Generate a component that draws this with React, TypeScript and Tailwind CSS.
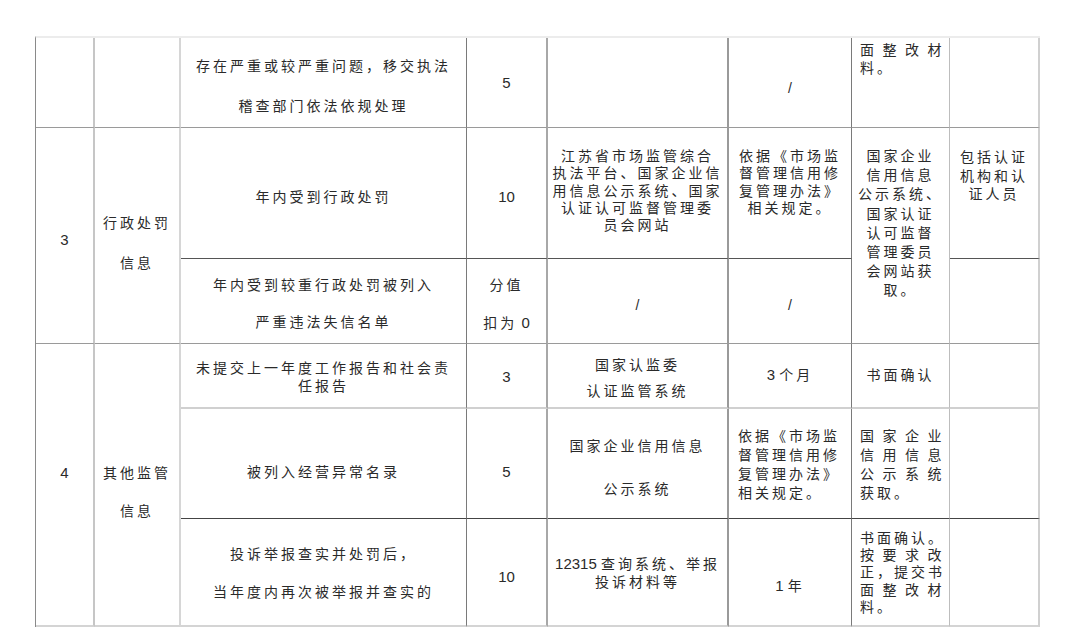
import React from "react";

export default function App() {
  return (
    <div className="w-[1080px] h-[628px] bg-white overflow-hidden font-['Liberation_Sans','Noto_Sans_CJK_SC',sans-serif] text-[14px] text-[#2a2a2a] tracking-[3px]">
      <div className="ml-[35px] mt-[36px] w-fit grid grid-cols-[59px_86px_286px_81px_181px_123px_98px_90px] grid-rows-[90px_131px_85px_65px_110px_108px] border-l border-l-[#8a8a8a] border-t-2 border-t-[#ececec]">
        {/* Row 1 */}
        <div className="col-start-1 row-start-1 border-r-2 border-r-[#c6c6c6] border-b border-b-[#9a9a9a]" />
        <div className="col-start-2 row-start-1 border-r-2 border-r-[#d6d6d6] border-b border-b-[#9a9a9a]" />
        <div className="col-start-3 row-start-1 border-r border-r-[#7a7a7a] border-b border-b-[#9a9a9a] flex flex-col items-center pt-[8px] leading-[40px] whitespace-nowrap">
          <div>存在严重或较严重问题，移交执法</div>
          <div>稽查部门依法依规处理</div>
        </div>
        <div className="col-start-4 row-start-1 border-r-2 border-r-[#a8a8a8] border-b border-b-[#9a9a9a] flex items-center justify-center pt-[2px] tracking-normal text-[15px]">5</div>
        <div className="col-start-5 row-start-1 border-r-2 border-r-[#9a9a9a] border-b border-b-[#9a9a9a]" />
        <div className="col-start-6 row-start-1 border-r border-r-[#7a7a7a] border-b border-b-[#9a9a9a] flex items-center justify-center pt-[12px] tracking-normal">/</div>
        <div className="col-start-7 row-start-1 border-r border-r-[#bdbdbd] border-b border-b-[#9a9a9a] flex flex-col items-start pl-[8px] pt-[3px] leading-[18px] whitespace-nowrap">
          <div className="tracking-[8.5px]">面整改材</div>
          <div>料。</div>
        </div>
        <div className="col-start-8 row-start-1 border-r-2 border-r-[#d0d0d0] border-b border-b-[#9a9a9a]" />

        {/* Block 3 */}
        <div className="col-start-1 row-start-2 row-span-2 border-r-2 border-r-[#c6c6c6] border-b border-b-[#9a9a9a] flex items-center justify-center pt-[10px] tracking-normal text-[15px]">3</div>
        <div className="col-start-2 row-start-2 row-span-2 border-r-2 border-r-[#d6d6d6] border-b border-b-[#9a9a9a] flex flex-col items-center justify-center pt-[14px] leading-[40px] whitespace-nowrap">
          <div>行政处罚</div>
          <div>信息</div>
        </div>
        <div className="col-start-3 row-start-2 border-r border-r-[#7a7a7a] border-b border-b-[#555] flex items-center justify-center pt-[9px] whitespace-nowrap">年内受到行政处罚</div>
        <div className="col-start-4 row-start-2 border-r-2 border-r-[#a8a8a8] border-b border-b-[#555] flex items-center justify-center pt-[9px] tracking-normal text-[15px]">10</div>
        <div className="col-start-5 row-start-2 border-r-2 border-r-[#9a9a9a] border-b border-b-[#555] flex flex-col items-center pt-[20px] leading-[17.25px] whitespace-nowrap">
          <div>江苏省市场监管综合</div>
          <div>执法平台、国家企业信</div>
          <div>用信息公示系统、国家</div>
          <div>认证认可监督管理委</div>
          <div>员会网站</div>
        </div>
        <div className="col-start-6 row-start-2 border-r border-r-[#7a7a7a] border-b border-b-[#555] flex flex-col items-center pt-[20px] leading-[17.25px] whitespace-nowrap">
          <div>依据《市场监</div>
          <div>督管理信用修</div>
          <div>复管理办法》</div>
          <div>相关规定。</div>
        </div>
        <div className="col-start-7 row-start-2 row-span-2 border-r border-r-[#bdbdbd] border-b border-b-[#9a9a9a] flex flex-col items-center pt-[19px] leading-[19.2px] whitespace-nowrap">
          <div>国家企业</div>
          <div>信用信息</div>
          <div>公示系统、</div>
          <div>国家认证</div>
          <div>认可监督</div>
          <div>管理委员</div>
          <div>会网站获</div>
          <div>取。</div>
        </div>
        <div className="col-start-8 row-start-2 border-r-2 border-r-[#d0d0d0] border-b border-b-[#555] flex flex-col items-center pt-[20px] leading-[18.5px] whitespace-nowrap">
          <div>包括认证</div>
          <div>机构和认</div>
          <div>证人员</div>
        </div>
        <div className="col-start-3 row-start-3 border-r border-r-[#7a7a7a] border-b border-b-[#9a9a9a] flex flex-col items-center pt-[8px] leading-[37px] whitespace-nowrap">
          <div>年内受到较重行政处罚被列入</div>
          <div>严重违法失信名单</div>
        </div>
        <div className="col-start-4 row-start-3 border-r-2 border-r-[#a8a8a8] border-b border-b-[#9a9a9a] flex flex-col items-center pt-[8px] leading-[37px] whitespace-nowrap">
          <div>分值</div>
          <div>扣为<span className="tracking-normal text-[15px]"> 0</span></div>
        </div>
        <div className="col-start-5 row-start-3 border-r-2 border-r-[#9a9a9a] border-b border-b-[#9a9a9a] flex items-center justify-center pt-[8px] tracking-normal">/</div>
        <div className="col-start-6 row-start-3 border-r border-r-[#7a7a7a] border-b border-b-[#9a9a9a] flex items-center justify-center pt-[8px] tracking-normal">/</div>
        <div className="col-start-8 row-start-3 border-r-2 border-r-[#d0d0d0] border-b border-b-[#9a9a9a]" />

        {/* Block 4 */}
        <div className="col-start-1 row-start-4 row-span-3 border-r-2 border-r-[#c6c6c6] border-b-2 border-b-[#d4d4d4] flex flex-col items-center pt-[119px] leading-[20px] tracking-normal text-[15px]">4</div>
        <div className="col-start-2 row-start-4 row-span-3 border-r-2 border-r-[#d6d6d6] border-b-2 border-b-[#d4d4d4] flex flex-col items-center pt-[110px] leading-[38px] whitespace-nowrap">
          <div>其他监管</div>
          <div>信息</div>
        </div>

        <div className="col-start-3 row-start-4 border-r border-r-[#7a7a7a] border-b-2 border-b-[#d0d0d0] flex flex-col items-center justify-center leading-[18px] pt-[2px] whitespace-nowrap">
          <div>未提交上一年度工作报告和社会责</div>
          <div>任报告</div>
        </div>
        <div className="col-start-4 row-start-4 border-r-2 border-r-[#a8a8a8] border-b-2 border-b-[#d0d0d0] flex items-center justify-center pt-[3px] tracking-normal text-[15px]">3</div>
        <div className="col-start-5 row-start-4 border-r-2 border-r-[#9a9a9a] border-b-2 border-b-[#d0d0d0] flex flex-col items-center justify-center leading-[26px] pt-[4px] whitespace-nowrap">
          <div>国家认监委</div>
          <div>认证监管系统</div>
        </div>
        <div className="col-start-6 row-start-4 border-r border-r-[#7a7a7a] border-b-2 border-b-[#d0d0d0] flex items-center justify-center whitespace-nowrap">
          <span><span className="tracking-normal text-[15px]">3 </span>个月</span>
        </div>
        <div className="col-start-7 row-start-4 border-r border-r-[#bdbdbd] border-b-2 border-b-[#d0d0d0] flex items-center justify-center whitespace-nowrap">书面确认</div>
        <div className="col-start-8 row-start-4 border-r-2 border-r-[#d0d0d0] border-b-2 border-b-[#d0d0d0]" />

        <div className="col-start-3 row-start-5 border-r border-r-[#7a7a7a] border-b border-b-[#444] flex items-center justify-center pt-[18px] whitespace-nowrap">被列入经营异常名录</div>
        <div className="col-start-4 row-start-5 border-r-2 border-r-[#a8a8a8] border-b border-b-[#444] flex items-center justify-center pt-[18px] tracking-normal text-[15px]">5</div>
        <div className="col-start-5 row-start-5 border-r-2 border-r-[#9a9a9a] border-b border-b-[#444] flex flex-col items-center justify-center leading-[43px] pt-[8px] whitespace-nowrap">
          <div>国家企业信用信息</div>
          <div>公示系统</div>
        </div>
        <div className="col-start-6 row-start-5 border-r border-r-[#7a7a7a] border-b border-b-[#444] flex flex-col items-start justify-center pl-[9px] leading-[19px] pt-[3px] whitespace-nowrap">
          <div>依据《市场监</div>
          <div>督管理信用修</div>
          <div>复管理办法》</div>
          <div>相关规定。</div>
        </div>
        <div className="col-start-7 row-start-5 border-r border-r-[#bdbdbd] border-b border-b-[#444] flex flex-col items-start justify-center pl-[8px] leading-[19px] pt-[3px] whitespace-nowrap">
          <div className="tracking-[8.5px]">国家企业</div>
          <div className="tracking-[8.5px]">信用信息</div>
          <div className="tracking-[8.5px]">公示系统</div>
          <div>获取。</div>
        </div>
        <div className="col-start-8 row-start-5 border-r-2 border-r-[#d0d0d0] border-b border-b-[#444]" />

        <div className="col-start-3 row-start-6 border-r border-r-[#7a7a7a] border-b-2 border-b-[#d4d4d4] flex flex-col items-center justify-center leading-[38px] pt-[2px] whitespace-nowrap">
          <div>投诉举报查实并处罚后，</div>
          <div>当年度内再次被举报并查实的</div>
        </div>
        <div className="col-start-4 row-start-6 border-r-2 border-r-[#a8a8a8] border-b-2 border-b-[#d4d4d4] flex items-center justify-center pt-[10px] tracking-normal text-[15px]">10</div>
        <div className="col-start-5 row-start-6 border-r-2 border-r-[#9a9a9a] border-b-2 border-b-[#d4d4d4] flex flex-col items-center justify-center leading-[18px] pt-[2px] whitespace-nowrap">
          <div><span className="tracking-normal text-[15px]">12315 </span>查询系统、举报</div>
          <div>投诉材料等</div>
        </div>
        <div className="col-start-6 row-start-6 border-r border-r-[#7a7a7a] border-b-2 border-b-[#d4d4d4] flex items-center justify-center pt-[28px] whitespace-nowrap">
          <span><span className="tracking-normal text-[15px]">1 </span>年</span>
        </div>
        <div className="col-start-7 row-start-6 border-r border-r-[#bdbdbd] border-b-2 border-b-[#d4d4d4] flex flex-col items-start justify-center pl-[8px] leading-[17.3px] pt-[2px] whitespace-nowrap">
          <div>书面确认。</div>
          <div className="tracking-[8.5px]">按要求改</div>
          <div>正，提交书</div>
          <div className="tracking-[8.5px]">面整改材</div>
          <div>料。</div>
        </div>
        <div className="col-start-8 row-start-6 border-r-2 border-r-[#d0d0d0] border-b-2 border-b-[#d4d4d4]" />
      </div>
    </div>
  );
}
